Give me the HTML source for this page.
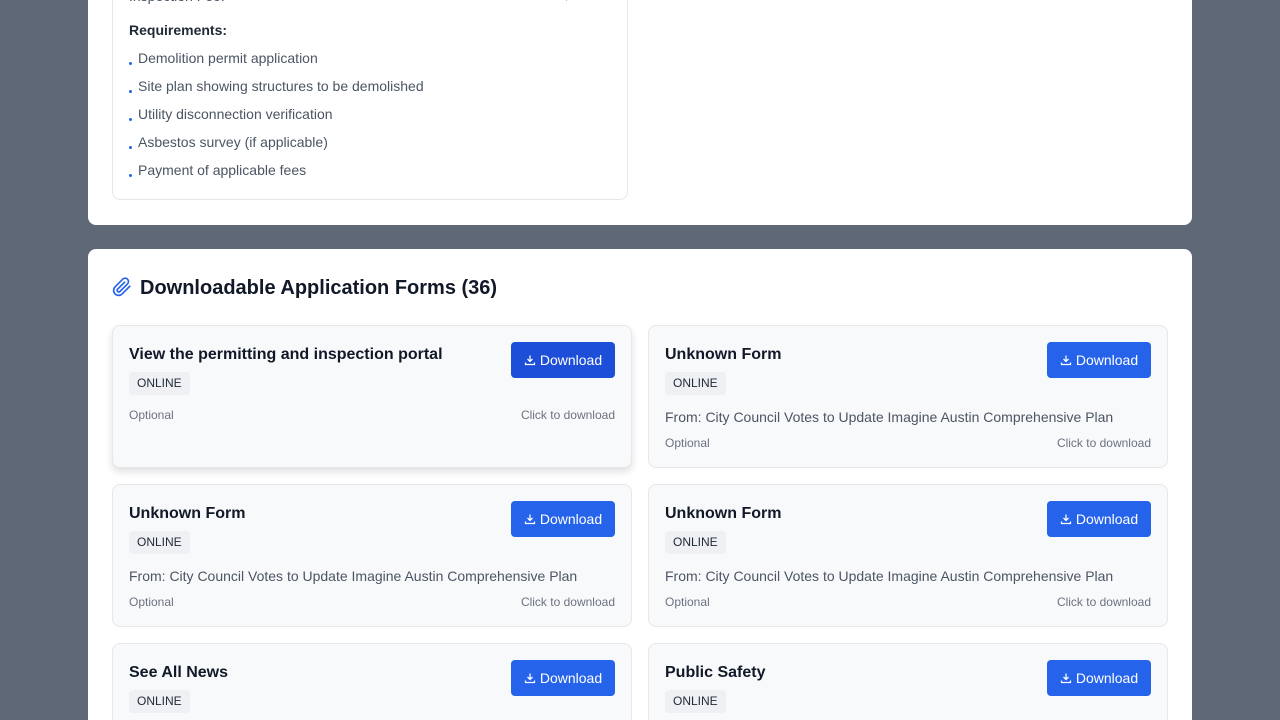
<!DOCTYPE html>
<html style="width:1280px;height:720px;overflow:hidden"><head><meta charset="utf-8"><style>
*{box-sizing:border-box;margin:0;padding:0}
body{width:1280px;height:720px;overflow:hidden;background:#5e6876;font-family:"Liberation Sans",sans-serif;position:relative}
.card{position:absolute;left:88px;width:1104px;background:#fff;border-radius:8px}
.inner{position:absolute;left:24px;top:-1px;width:516px;height:221px;border:1px solid #e5e7eb;border-radius:8px}
.fee{position:absolute;left:16px;top:8px;font-size:14px;color:#4b5563}
.feev{position:absolute;right:16px;top:6px;font-size:16px;color:#111827;font-weight:600}
.req{position:absolute;left:16px;top:42px;font-size:14px;font-weight:600;color:#1f2937}
.li{position:absolute;left:16px;font-size:14px;color:#4b5563}
.li b{display:inline-block;width:3px;height:3px;background:#2563eb;border-radius:50%;margin-right:6px;vertical-align:-2px}
h2{position:absolute;left:52px;top:28px;font-size:20px;font-weight:600;color:#111827}
.f{position:absolute;width:520px;height:143px;background:#f8f9fb;border:1px solid #e5e7eb;border-radius:8px}
.f.h{box-shadow:0 4px 8px rgba(0,0,0,.12)}
.t{position:absolute;left:16px;top:20px;font-size:16px;font-weight:600;color:#111827}
.bd{position:absolute;left:16px;top:46px;height:23px;padding:0 8px;background:#eef0f3;border-radius:4px;font-size:12px;line-height:23px;color:#1f2937}
.d{position:absolute;left:16px;top:83px;font-size:14px;color:#4b5563}
.o{position:absolute;left:16px;top:82px;font-size:12px;color:#6b7280}
.o.l{top:110px}
.c{position:absolute;right:16px;top:82px;font-size:12px;color:#6b7280}
.c.l{top:110px}
.btn{position:absolute;right:16px;top:16px;width:104px;height:36px;background:#2563eb;border-radius:4px;color:#fff;font-size:14px;line-height:36px;text-align:center}
.btn svg{vertical-align:-1px;margin-right:4px}
</style></head><body>
<div class="card" style="top:-20px;height:245px">
<div class="inner">
<div class="fee">Inspection Fee:</div><div class="feev">$50.00</div>
<div class="req">Requirements:</div>
<div class="li" style="top:70px"><b></b>Demolition permit application</div>
<div class="li" style="top:98px"><b></b>Site plan showing structures to be demolished</div>
<div class="li" style="top:126px"><b></b>Utility disconnection verification</div>
<div class="li" style="top:154px"><b></b>Asbestos survey (if applicable)</div>
<div class="li" style="top:182px"><b></b>Payment of applicable fees</div>
</div></div>
<div class="card" style="top:249px;height:471px;border-radius:8px 8px 0 0">
<svg style="position:absolute;left:24px;top:28px" width="20" height="20" viewBox="0 0 24 24" fill="none" stroke="#2563eb" stroke-width="2" stroke-linecap="round"><path d="M21.4 11.1l-9.2 9.2a6 6 0 01-8.5-8.5l9.2-9.2a4 4 0 015.7 5.7l-9.2 9.2a2 2 0 01-2.8-2.8l8.5-8.5"/></svg>
<h2>Downloadable Application Forms (36)</h2>
</div>
<div class="f h" style="left:112px;top:325px"><div class="t">View the permitting and inspection portal</div><div class="bd">ONLINE</div><div class="o">Optional</div><div class="c">Click to download</div><div class="btn" style="background:#1d4ed8"><svg width="12" height="12" viewBox="0 0 24 24" fill="none" stroke="#fff" stroke-width="2.5"><path d="M12 3v12M7 10l5 5 5-5M3 17v4h18v-4"/></svg>Download</div></div>
<div class="f" style="left:648px;top:325px"><div class="t">Unknown Form</div><div class="bd">ONLINE</div><div class="d">From: City Council Votes to Update Imagine Austin Comprehensive Plan</div><div class="o l">Optional</div><div class="c l">Click to download</div><div class="btn"><svg width="12" height="12" viewBox="0 0 24 24" fill="none" stroke="#fff" stroke-width="2.5"><path d="M12 3v12M7 10l5 5 5-5M3 17v4h18v-4"/></svg>Download</div></div>
<div class="f" style="left:112px;top:484px"><div class="t">Unknown Form</div><div class="bd">ONLINE</div><div class="d">From: City Council Votes to Update Imagine Austin Comprehensive Plan</div><div class="o l">Optional</div><div class="c l">Click to download</div><div class="btn"><svg width="12" height="12" viewBox="0 0 24 24" fill="none" stroke="#fff" stroke-width="2.5"><path d="M12 3v12M7 10l5 5 5-5M3 17v4h18v-4"/></svg>Download</div></div>
<div class="f" style="left:648px;top:484px"><div class="t">Unknown Form</div><div class="bd">ONLINE</div><div class="d">From: City Council Votes to Update Imagine Austin Comprehensive Plan</div><div class="o l">Optional</div><div class="c l">Click to download</div><div class="btn"><svg width="12" height="12" viewBox="0 0 24 24" fill="none" stroke="#fff" stroke-width="2.5"><path d="M12 3v12M7 10l5 5 5-5M3 17v4h18v-4"/></svg>Download</div></div>
<div class="f" style="left:112px;top:643px;height:77px;border-radius:8px 8px 0 0;border-bottom:none"><div class="t">See All News</div><div class="bd">ONLINE</div><div class="btn"><svg width="12" height="12" viewBox="0 0 24 24" fill="none" stroke="#fff" stroke-width="2.5"><path d="M12 3v12M7 10l5 5 5-5M3 17v4h18v-4"/></svg>Download</div></div>
<div class="f" style="left:648px;top:643px;height:77px;border-radius:8px 8px 0 0;border-bottom:none"><div class="t">Public Safety</div><div class="bd">ONLINE</div><div class="btn"><svg width="12" height="12" viewBox="0 0 24 24" fill="none" stroke="#fff" stroke-width="2.5"><path d="M12 3v12M7 10l5 5 5-5M3 17v4h18v-4"/></svg>Download</div></div>
</body></html>
